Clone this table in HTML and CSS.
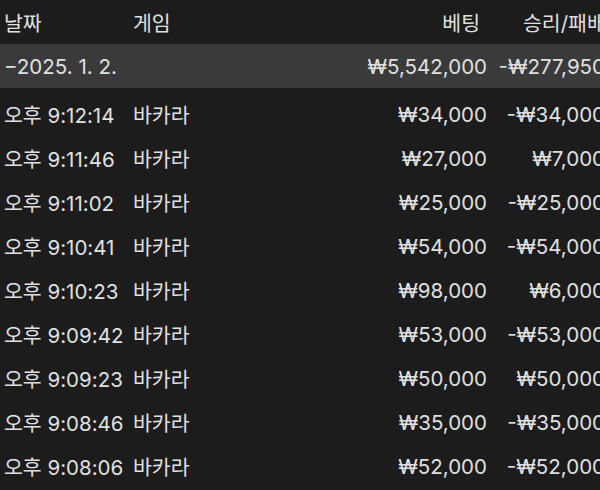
FILE: index.html
```html
<!DOCTYPE html>
<html lang="ko">
<head>
<meta charset="utf-8">
<link rel="stylesheet" href="styles.css">
</head>
<body>
<div class="table">
  <div class="row head">
    <div class="c date">날짜</div><div class="c game">게임</div><div class="c bet">베팅</div><div class="c res">승리/패배</div>
  </div>
  <div class="row group">
    <div class="c date">−2025. 1. 2.</div><div class="c game"></div><div class="c bet">₩5,542,000</div><div class="c res">-₩277,950</div>
  </div>
  <div class="row item"><div class="c date">오후 9:12:14</div><div class="c game">바카라</div><div class="c bet">₩34,000</div><div class="c res">-₩34,000</div></div>
  <div class="row item"><div class="c date">오후 9:11:46</div><div class="c game">바카라</div><div class="c bet">₩27,000</div><div class="c res">₩7,000</div></div>
  <div class="row item"><div class="c date">오후 9:11:02</div><div class="c game">바카라</div><div class="c bet">₩25,000</div><div class="c res">-₩25,000</div></div>
  <div class="row item"><div class="c date">오후 9:10:41</div><div class="c game">바카라</div><div class="c bet">₩54,000</div><div class="c res">-₩54,000</div></div>
  <div class="row item"><div class="c date">오후 9:10:23</div><div class="c game">바카라</div><div class="c bet">₩98,000</div><div class="c res">₩6,000</div></div>
  <div class="row item"><div class="c date">오후 9:09:42</div><div class="c game">바카라</div><div class="c bet">₩53,000</div><div class="c res">-₩53,000</div></div>
  <div class="row item"><div class="c date">오후 9:09:23</div><div class="c game">바카라</div><div class="c bet">₩50,000</div><div class="c res">₩50,000</div></div>
  <div class="row item"><div class="c date">오후 9:08:46</div><div class="c game">바카라</div><div class="c bet">₩35,000</div><div class="c res">-₩35,000</div></div>
  <div class="row item"><div class="c date">오후 9:08:06</div><div class="c game">바카라</div><div class="c bet">₩52,000</div><div class="c res">-₩52,000</div></div>
</div>
</body>
</html>
```
FILE: styles.css
```css
html, body {
  margin: 0;
  padding: 0;
  background: #1c1c1c;
  overflow: hidden;
}
body {
  width: 600px;
  height: 490px;
  font-family: "Inter", "Noto Sans CJK KR", sans-serif;
  font-size: 20.5px;
  color: #e0e0e0;
}
.table {
  width: 605px;
}
.row {
  display: grid;
  grid-template-columns: 129px 180px 174px 118px;
  padding-left: 4px;
  height: 44px;
  align-items: center;
  white-space: nowrap;
}
.item {
  box-sizing: border-box;
  padding-top: 8px;
}
.group {
  background: #3a3a3a;
}
.head .bet {
  padding-right: 7px;
}
.bet, .res {
  text-align: right;
}
.head .res {
  text-align: left;
  padding-left: 36px;
}
```
